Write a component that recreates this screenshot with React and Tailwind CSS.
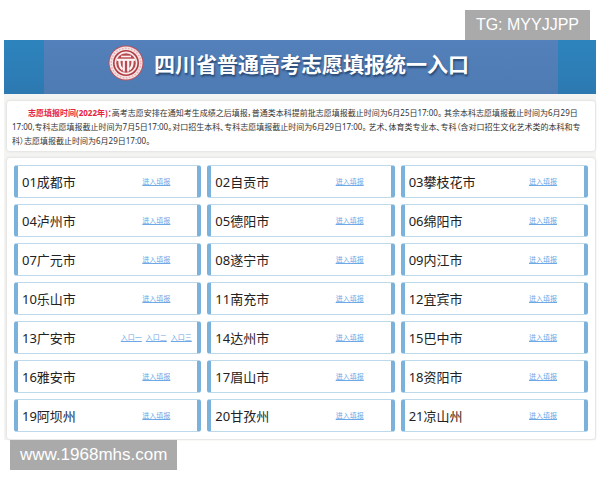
import React from 'react';

const cities = [
  '01成都市', '02自贡市', '03攀枝花市',
  '04泸州市', '05德阳市', '06绵阳市',
  '07广元市', '08遂宁市', '09内江市',
  '10乐山市', '11南充市', '12宜宾市',
  '13广安市', '14达州市', '15巴中市',
  '16雅安市', '17眉山市', '18资阳市',
  '19阿坝州', '20甘孜州', '21凉山州',
];

// 广安市 has three separate entries
const multiEntry = {
  '13广安市': ['入口一', '入口二', '入口三'],
};

const Logo = () => (
  <svg viewBox="0 0 36 36" className="w-9 h-9 shrink-0" aria-hidden="true">
    <circle cx="18" cy="18" r="17.5" fill="#b9505c" />
    <circle cx="18" cy="18" r="16.5" fill="#f6e2e4" />
    <circle cx="18" cy="18" r="14.8" fill="none" stroke="#e3b0b4" strokeWidth="1.4" strokeDasharray="1.6 1.5" />
    <circle cx="18" cy="18" r="13" fill="#b03a42" />
    <circle cx="18" cy="18" r="11.4" fill="#f8eaea" />
    <circle cx="18" cy="18" r="9.8" fill="#b84850" />
    <g fill="none" stroke="#fbf2f2" strokeWidth="2.2">
      <path d="M13 11.500h10" strokeWidth="1.6" />
      <path d="M9 14.800h18" />
      <path d="M11.500 15v2.500q0 4.500 3 7" />
      <path d="M24.500 15v2.500q0 4.500-3 7" />
      <path d="M15.800 15v11.500" />
      <path d="M20.200 15v11.500" />
    </g>
  </svg>
);

const CityCard = ({ name }) => {
  const links = multiEntry[name] || ['进入填报'];
  return (
    <li className="flex items-center h-[33px] rounded-[3px] border-y border-x-4 border-y-[#bcdaec] border-x-[#7ab2dc] bg-white">
      <span className="flex-1 pl-1 text-[13px] leading-5 whitespace-nowrap text-[#222222]">{name}</span>
      <span className="flex justify-center gap-1 w-[82px] shrink-0">
        {links.map((text) => (
          <a key={text} href="#" className="text-[7px] leading-3 whitespace-nowrap underline text-[#6ea8e6]">
            {text}
          </a>
        ))}
      </span>
    </li>
  );
};

const App = () => {
  return (
    <div className="bg-white pt-[10px] font-['Noto_Sans','Noto_Sans_CJK_SC',sans-serif]">
      {/* Contact tag */}
      <div className="flex justify-end pr-[10px]">
        <p className="px-[11px] h-[30px] leading-[30px] text-[16px] text-white bg-[#aaaaaa] font-['Liberation_Sans',sans-serif]">
          TG: MYYJJPP
        </p>
      </div>

      <div className="mx-1 bg-[#f4f4f3]">
        {/* Banner */}
        <header className="flex bg-linear-to-b from-[#2d84bd] to-[#2d79b2]">
          <div className="flex-1 flex items-center gap-[10px] h-[54px] ml-10 mr-[38px] pl-16 pb-2 bg-linear-to-b from-[#5480bb] to-[#4f7bb3]">
            <Logo />
            <h1 className="text-[21px] leading-8 font-bold whitespace-nowrap text-white [text-shadow:1px_2px_2px_#25456f] font-['Noto_Sans_CJK_SC',sans-serif]">
              四川省普通高考志愿填报统一入口
            </h1>
          </div>
        </header>

        <main className="flex flex-col gap-[7px] pt-[7px] pb-px pl-[3px] pr-px">
          {/* Deadlines */}
          <section className="px-[5px] pt-[5px] pb-[3px] rounded-[3px] bg-white shadow-[0_0_3px_#cfcfcb]">
            <p className="indent-4 text-[8px] leading-[14px] whitespace-nowrap text-[#333333] [font-feature-settings:'palt']">
              <strong className="text-[#e62343]">志愿填报时间(2022年)：</strong>
              高考志愿安排在通知考生成绩之后填报，普通类本科提前批志愿填报截止时间为6月25日17:00。 其余本科志愿填报截止时间为6月29日
              <br />
              17:00,专科志愿填报截止时间为7月5日17:00。对口招生本科、专科志愿填报截止时间为6月29日17:00。 艺术、体育类专业本、专科（含对口招生文化艺术类的本科和专
              <br />
              科）志愿填报截止时间为6月29日17:00。
            </p>
          </section>

          {/* City entries */}
          <section className="p-[7px] rounded-[3px] bg-white shadow-[0_0_3px_#cfcfcb]">
            <ul className="grid grid-cols-3 gap-[6px]">
              {cities.map((name) => (
                <CityCard key={name} name={name} />
              ))}
            </ul>
          </section>
        </main>
      </div>

      {/* Site tag */}
      <footer className="flex pl-[10px] pb-[10px]">
        <p className="px-[10px] h-[30px] leading-[30px] text-[17px] text-white bg-[#aaaaaa] font-['Liberation_Sans',sans-serif]">
          www.1968mhs.com
        </p>
      </footer>
    </div>
  );
};

export default App;
